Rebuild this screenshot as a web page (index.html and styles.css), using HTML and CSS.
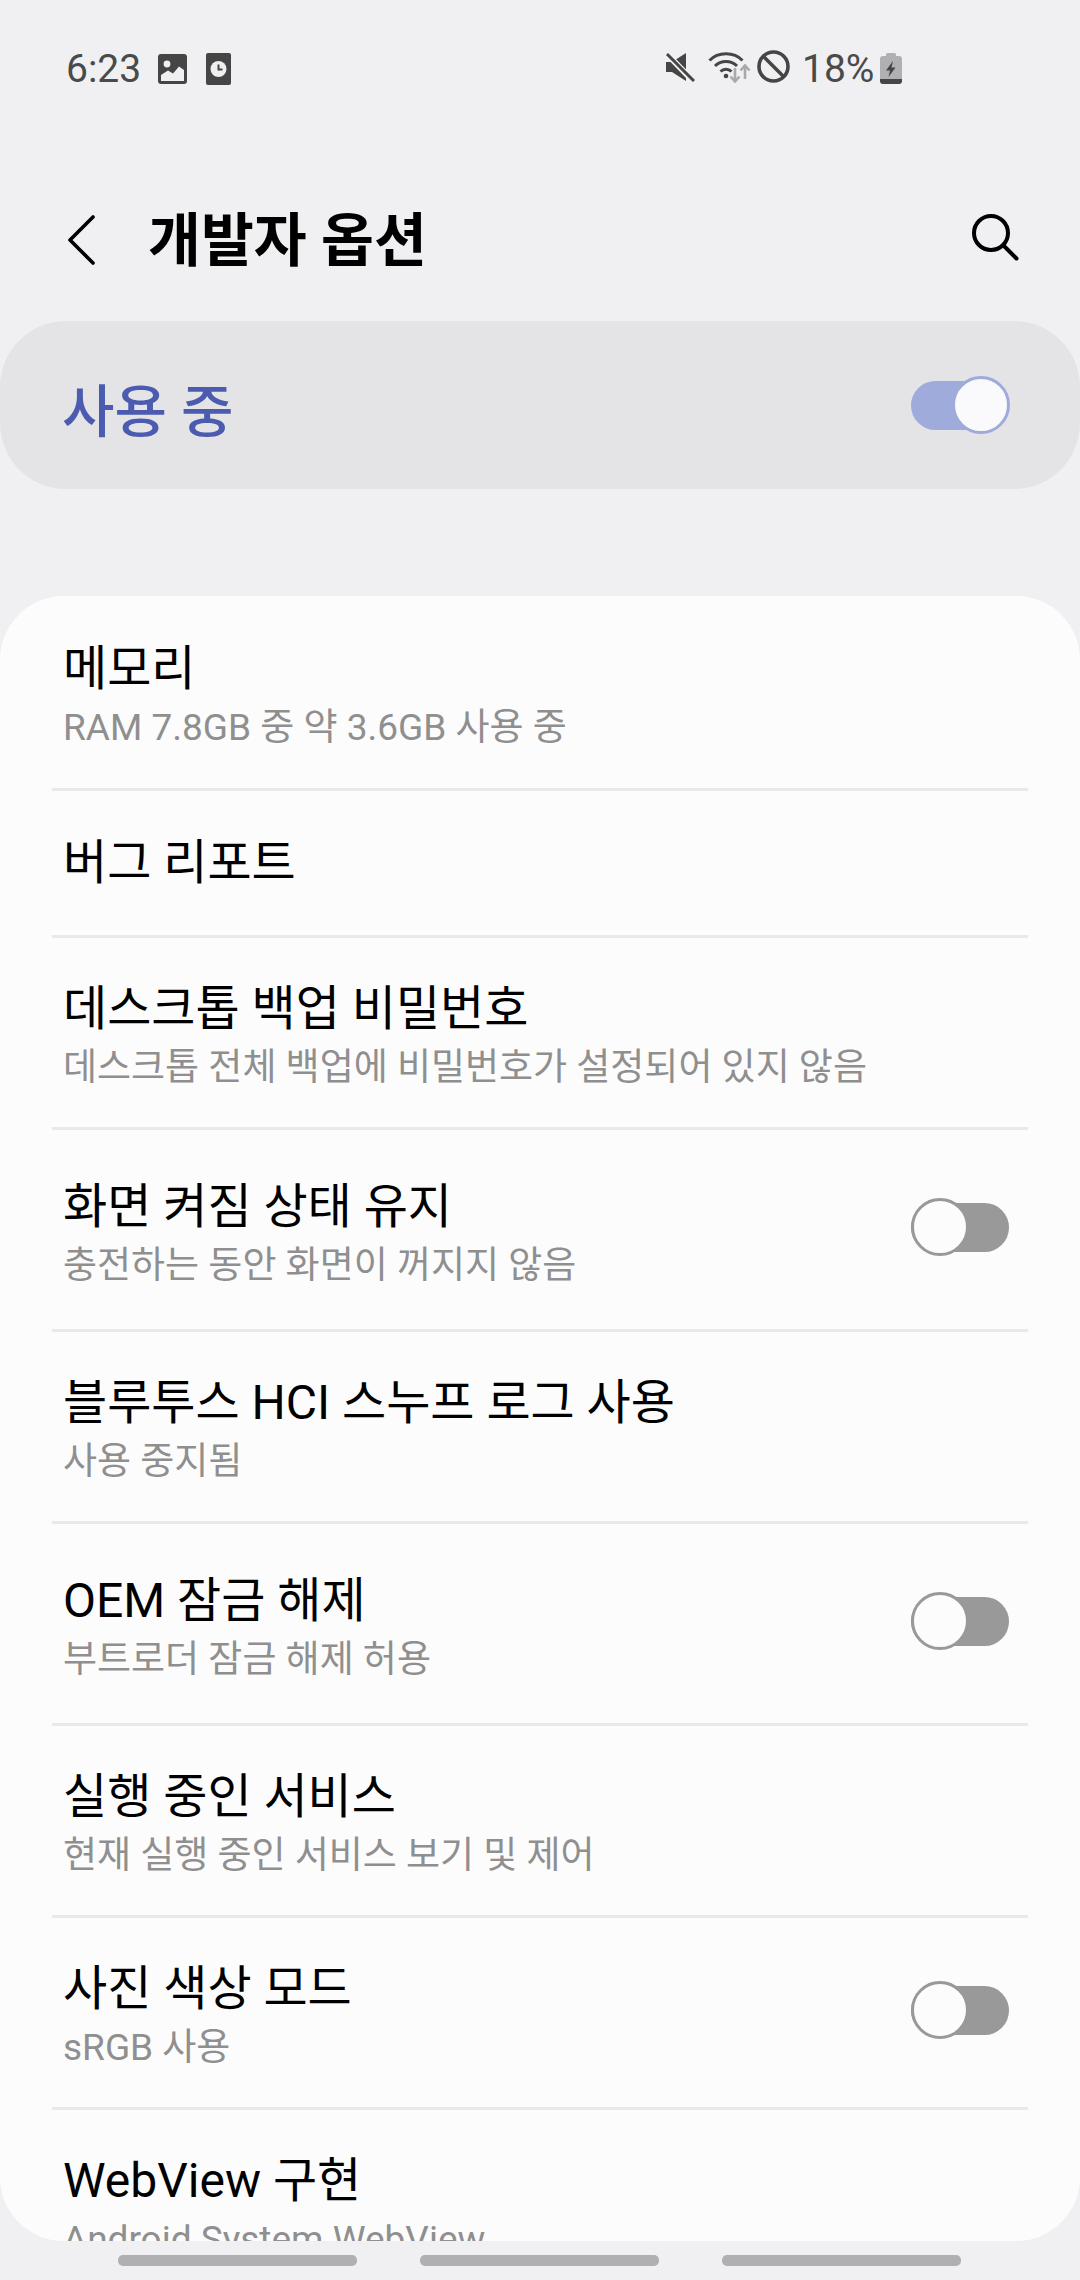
FILE: index.html
```html
<!DOCTYPE html>
<html lang="ko">
<head>
    <meta charset="UTF-8">
    <meta name="viewport" content="width=device-width, initial-scale=1.0">
    <title>개발자 옵션</title>
    <link rel="stylesheet" href="styles.css">
</head>
<body>

    <div class="status-bar">
        <span class="status-time">6:23</span>
        <svg class="icon-picture" width="29" height="30" viewBox="0 0 29 30">
            <rect x="0" y="0" width="29" height="30" rx="3" fill="#454545"/>
            <circle cx="9" cy="10" r="3.4" fill="#f0f0f2"/>
            <path d="M3 27V21L10 16.5L15 19.5L21 12.5L26 16V27Z" fill="#f0f0f2"/>
        </svg>
        <svg class="icon-clock" width="25" height="32" viewBox="0 0 25 32">
            <rect x="0" y="0" width="25" height="32" rx="2" fill="#454545"/>
            <circle cx="12.500" cy="16" r="8" fill="#f0f0f2"/>
            <path d="M12.500 11.500V16.500H16.500" fill="none" stroke="#454545" stroke-width="2"/>
        </svg>
        <div class="status-right">
            <svg class="icon-mute" width="30" height="30" viewBox="0 0 30 30">
                <path d="M1 10H7L21 1V29L7 20H1Z" fill="#454545"/>
                <path d="M1 1L28 29" stroke="#f0f0f2" stroke-width="6"/>
                <path d="M2 2L29 29" stroke="#454545" stroke-width="3"/>
            </svg>
            <svg class="icon-wifi" width="43" height="32" viewBox="0 0 43 32">
                <g fill="none" stroke="#454545" stroke-width="3">
                    <path d="M1.500 9.500C10 0.500 26 0.500 34.500 9.500"/>
                    <path d="M7 15C13 9 23 9 29 15"/>
                    <path d="M12.500 20.500C15.500 17.500 20.500 17.500 23.500 20.500"/>
                </g>
                <circle cx="18" cy="25" r="2.300" fill="#454545"/>
                <path d="M27 17V30M22.500 25.500L27 30.500L31.500 25.500" fill="none" stroke="#a9a9ab" stroke-width="2.600"/>
                <path d="M37 28V15M32.500 19.500L37 14.500L41.500 19.500" fill="none" stroke="#a9a9ab" stroke-width="2.600"/>
            </svg>
            <svg class="icon-block" width="33" height="33" viewBox="0 0 33 33">
                <circle cx="16.500" cy="16.500" r="14.500" fill="none" stroke="#454545" stroke-width="3.600"/>
                <path d="M6.500 6.500L26.500 26.500" stroke="#454545" stroke-width="3.600"/>
            </svg>
            <span class="status-battery-text">18%</span>
            <svg class="icon-battery" width="22" height="32" viewBox="0 0 22 32">
                <path d="M6 2.500Q6 1 7.500 1H14.500Q16 1 16 2.500V4H19Q22 4 22 7V27H0V7Q0 4 3 4H6Z" fill="#b0b0b2"/>
                <path d="M0 27H22V29Q22 32 19 32H3Q0 32 0 29Z" fill="#454545"/>
                <path d="M13 9L6 18.500H10L8.500 25L15.500 15.500H11.500Z" fill="#454545"/>
            </svg>
        </div>
    </div>

    <div class="app-bar">
        <svg class="back-icon" width="28" height="50" viewBox="0 0 28 50">
            <path d="M26 2L3 25L26 48" fill="none" stroke="#000" stroke-width="3.600" stroke-linecap="round" stroke-linejoin="round"/>
        </svg>
        <h1 class="app-title">개발자 옵션</h1>
        <svg class="search-icon" width="48" height="48" viewBox="0 0 48 48">
            <circle cx="20" cy="20" r="17" fill="none" stroke="#000" stroke-width="4"/>
            <path d="M32.500 32.500L45.500 45.500" stroke="#000" stroke-width="4" stroke-linecap="round"/>
        </svg>
    </div>

    <div class="master-bar">
        <span class="master-label">사용 중</span>
        <span class="switch switch-on"><span class="thumb"></span></span>
    </div>

    <div class="list-card">
        <div class="row row-first">
            <div class="row-text">
                <div class="row-title">메모리</div>
                <div class="row-sub">RAM 7.8GB 중 약 3.6GB 사용 중</div>
            </div>
        </div>
        <div class="row row-single">
            <div class="row-text">
                <div class="row-title">버그 리포트</div>
            </div>
        </div>
        <div class="row">
            <div class="row-text">
                <div class="row-title">데스크톱 백업 비밀번호</div>
                <div class="row-sub">데스크톱 전체 백업에 비밀번호가 설정되어 있지 않음</div>
            </div>
        </div>
        <div class="row row-switch">
            <div class="row-text">
                <div class="row-title">화면 켜짐 상태 유지</div>
                <div class="row-sub">충전하는 동안 화면이 꺼지지 않음</div>
            </div>
            <span class="switch"><span class="thumb"></span></span>
        </div>
        <div class="row">
            <div class="row-text">
                <div class="row-title">블루투스 HCI 스누프 로그 사용</div>
                <div class="row-sub">사용 중지됨</div>
            </div>
        </div>
        <div class="row row-switch">
            <div class="row-text">
                <div class="row-title">OEM 잠금 해제</div>
                <div class="row-sub">부트로더 잠금 해제 허용</div>
            </div>
            <span class="switch"><span class="thumb"></span></span>
        </div>
        <div class="row">
            <div class="row-text">
                <div class="row-title">실행 중인 서비스</div>
                <div class="row-sub">현재 실행 중인 서비스 보기 및 제어</div>
            </div>
        </div>
        <div class="row">
            <div class="row-text">
                <div class="row-title">사진 색상 모드</div>
                <div class="row-sub">sRGB 사용</div>
            </div>
            <span class="switch"><span class="thumb"></span></span>
        </div>
        <div class="row">
            <div class="row-text">
                <div class="row-title">WebView 구현</div>
                <div class="row-sub">Android System WebView</div>
            </div>
        </div>
    </div>

    <div class="nav-bar">
        <span class="nav-pill"></span>
        <span class="nav-pill"></span>
        <span class="nav-pill"></span>
    </div>

</body>
</html>
```

FILE: styles.css
```css
html, body {
    margin: 0;
    padding: 0;
}
body {
    width: 1080px;
    height: 2280px;
    overflow: hidden;
    background-color: #f0f0f2;
    font-family: Roboto, "Noto Sans CJK KR", sans-serif;
}

/* status bar */
.status-bar {
    height: 137px;
    box-sizing: border-box;
    padding: 50px 0 0 66px;
    display: flex;
    align-items: flex-start;
    color: #4a4a4a;
}
.status-time {
    font-size: 39px;
    line-height: 38px;
    width: 92px;
}
.icon-picture {
    margin-top: 4px;
    margin-right: 19px;
}
.icon-clock {
    margin-top: 3px;
}
.status-right {
    margin-left: 434px;
    display: flex;
    align-items: flex-start;
}
.icon-mute {
    margin-top: 2px;
    margin-right: 13px;
}
.icon-wifi {
    margin-top: 1px;
    margin-right: 6px;
}
.icon-block {
    margin-right: 12px;
}
.status-battery-text {
    font-size: 39px;
    line-height: 38px;
    width: 78px;
}
.icon-battery {
    margin-top: 2px;
}

/* title row */
.app-bar {
    height: 184px;
    box-sizing: border-box;
    padding: 78px 61px 0 67px;
    display: flex;
    align-items: flex-start;
}
.back-icon {
    flex: none;
}
.app-title {
    margin: -12px 0 0 53px;
    flex: 1;
    font-size: 57.5px;
    line-height: 78px;
    font-weight: 700;
    color: #000;
}
.search-icon {
    margin-top: -2px;
}

/* master switch */
.master-bar {
    height: 168px;
    box-sizing: border-box;
    padding: 0 71px 0 62px;
    border-radius: 66px;
    background-color: #e4e4e6;
    display: flex;
    align-items: center;
    justify-content: space-between;
}
.master-label {
    margin-top: 3px;
    font-size: 57px;
    font-weight: 500;
    color: #4a5bb0;
}

/* switches */
.switch {
    position: relative;
    display: block;
    flex: none;
    width: 98px;
    height: 49px;
    margin-bottom: 5px;
    border-radius: 25px;
    background-color: #999;
}
.thumb {
    position: absolute;
    left: 0;
    top: -5px;
    width: 58px;
    height: 58px;
    box-sizing: border-box;
    border-radius: 50%;
    border: 3px solid #999;
    background-color: #fcfcfc;
}
.switch-on {
    margin-bottom: 0;
    background-color: #9fabdb;
}
.switch-on .thumb {
    left: 41px;
    border-color: #9fabdb;
    background-color: #fafafc;
}

/* list */
.list-card {
    margin-top: 107px;
    height: 1645px;
    overflow: hidden;
    border-radius: 64px;
    background-color: #fcfcfc;
    padding: 0 52px;
    box-sizing: border-box;
}
.row {
    display: flex;
    align-items: center;
    justify-content: space-between;
    padding-right: 19px;
    padding-left: 11px;
    border-bottom: 3px solid #e9e9e9;
}
.row:last-child {
    border-bottom: 0;
}
.row-text {
    padding: 41px 0 30px;
}
.row-first .row-text {
    padding: 43px 0 31px;
}
.row-single .row-text {
    padding: 42px 0 43px;
}
.row-switch .row-text {
    padding: 47px 0 34px;
}
.row-title {
    font-size: 48px;
    line-height: 59px;
    color: #000;
}
.row-sub {
    font-size: 37px;
    line-height: 59px;
    color: #8f8f8f;
}

/* bottom nav */
.nav-bar {
    margin-top: 14px;
    padding-left: 118px;
    display: flex;
    gap: 63px;
}
.nav-pill {
    width: 239px;
    height: 11px;
    border-radius: 5px;
    background-color: #b0b0b2;
}
```
